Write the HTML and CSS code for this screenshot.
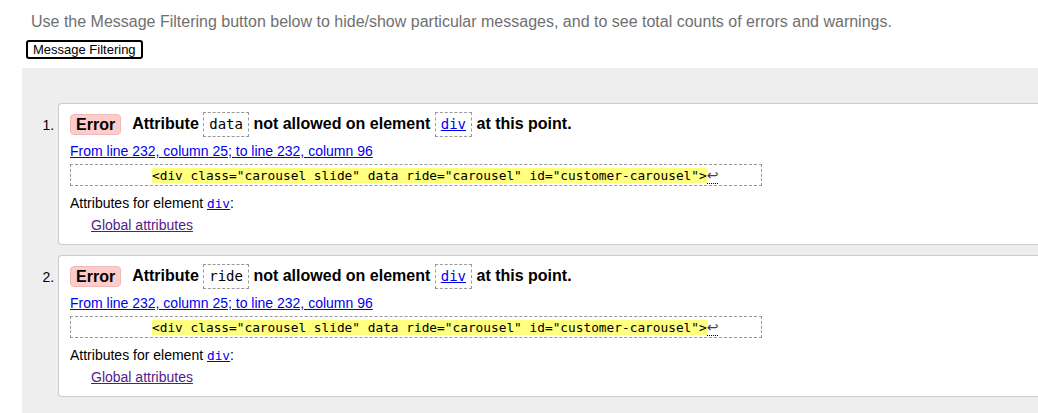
FILE: index.html
```html
<!DOCTYPE html>
<html lang="en">
<head>
<meta charset="utf-8">
<title>Validator messages</title>
<link rel="stylesheet" href="styles.css">
</head>
<body>
<p class="intro">Use the Message Filtering button below to hide/show particular messages, and to see total counts of errors and warnings.</p>
<button class="filter-btn" type="button">Message Filtering</button>
<div class="results">
  <ol class="messages">
    <li class="msg">
      <p class="title"><strong class="badge">Error</strong><span class="text">Attribute <code class="box">data</code> not allowed on element <code class="box"><a href="#div">div</a></code> at this point.</span></p>
      <p class="location"><a href="#l232">From line 232, column 25; to line 232, column 96</a></p>
      <p class="extract"><code><span class="hl">&lt;div class="carousel slide" data ride="carousel" id="customer-carousel"&gt;</span><span class="lf">↩</span></code></p>
      <p class="attrs">Attributes for element <code><a href="#div">div</a></code>:</p>
      <p class="global"><a class="visited" href="#global">Global attributes</a></p>
    </li>
    <li class="msg">
      <p class="title"><strong class="badge">Error</strong><span class="text">Attribute <code class="box">ride</code> not allowed on element <code class="box"><a href="#div">div</a></code> at this point.</span></p>
      <p class="location"><a href="#l232">From line 232, column 25; to line 232, column 96</a></p>
      <p class="extract"><code><span class="hl">&lt;div class="carousel slide" data ride="carousel" id="customer-carousel"&gt;</span><span class="lf">↩</span></code></p>
      <p class="attrs">Attributes for element <code><a href="#div">div</a></code>:</p>
      <p class="global"><a class="visited" href="#global">Global attributes</a></p>
    </li>
  </ol>
</div>
</body>
</html>
```
FILE: styles.css
```css
html, body {
  margin: 0;
  padding: 0;
  overflow: hidden;
  background: #fff;
}
body {
  font-family: "Liberation Sans", Arial, sans-serif;
  color: #000;
  width: 1038px;
  height: 413px;
}
.intro {
  margin: 13px 0 0 31px;
  font-size: 16px;
  line-height: 18px;
  color: #707070;
  white-space: nowrap;
}
.filter-btn {
  display: block;
  margin: 9px 0 0 26px;
  height: 19px;
  padding: 0 5px;
  border: 2px solid #000;
  border-radius: 3px;
  background: #fff;
  font-family: "Liberation Sans", Arial, sans-serif;
  font-size: 13px;
  line-height: 15px;
  color: #000;
}
.results {
  margin: 9px 0 0 22px;
  background: #eee;
  padding: 35px 0 16px 0;
}
.messages {
  margin: 0;
  padding: 0 0 0 36px;
  font-size: 14px;
}
.msg {
  background: #fff;
  border: 1px solid #ccc;
  border-right: none;
  border-radius: 4px 0 0 4px;
  padding: 7px 11px 10px 11px;
  margin-bottom: 10px;
}
.msg:last-child { margin-bottom: 0; }
.msg p { margin: 0; }
.title {
  height: 26px;
  line-height: 26px;
  font-size: 16px;
  display: flex;
  align-items: center;
  white-space: nowrap;
}
.badge {
  display: inline-block;
  height: 19px;
  line-height: 19px;
  padding: 0 5px;
  background: #fcc;
  border: 1px solid #f0b8b8;
  border-radius: 4px;
  font-weight: bold;
  margin-right: 11px;
}
.text { font-weight: bold; }
.box {
  display: inline-block;
  font-family: "DejaVu Sans Mono", monospace;
  font-weight: normal;
  font-size: 14px;
  line-height: 23px;
  padding: 0 5px;
  border: 1px dashed #999;
  vertical-align: middle;
}
a { color: #00e; }
a.visited { color: #551a8b; }
.location {
  margin-top: 5px !important;
  height: 18px;
  line-height: 18px;
}
.extract {
  margin-top: 4px !important;
  display: block;
  width: fit-content;
  border: 1px dashed #999;
  height: 20px;
  line-height: 20px;
  padding: 0 43px 0 81px;
  white-space: pre;
}
.extract code {
  font-family: "DejaVu Sans Mono", monospace;
  font-size: 12.8px;
}
.hl { background: #ffff80; }
.lf {
  font-family: "DejaVu Sans", sans-serif;
  font-size: 14px;
  color: #444;
  border-bottom: 1px dotted #000;
}
.attrs {
  margin-top: 8px !important;
  height: 18px;
  line-height: 18px;
}
.attrs code {
  font-family: "DejaVu Sans Mono", monospace;
  font-size: 12.8px;
  line-height: 14px;
}
.global {
  margin-top: 4px !important;
  height: 18px;
  padding-left: 21px;
  line-height: 18px;
}
```
